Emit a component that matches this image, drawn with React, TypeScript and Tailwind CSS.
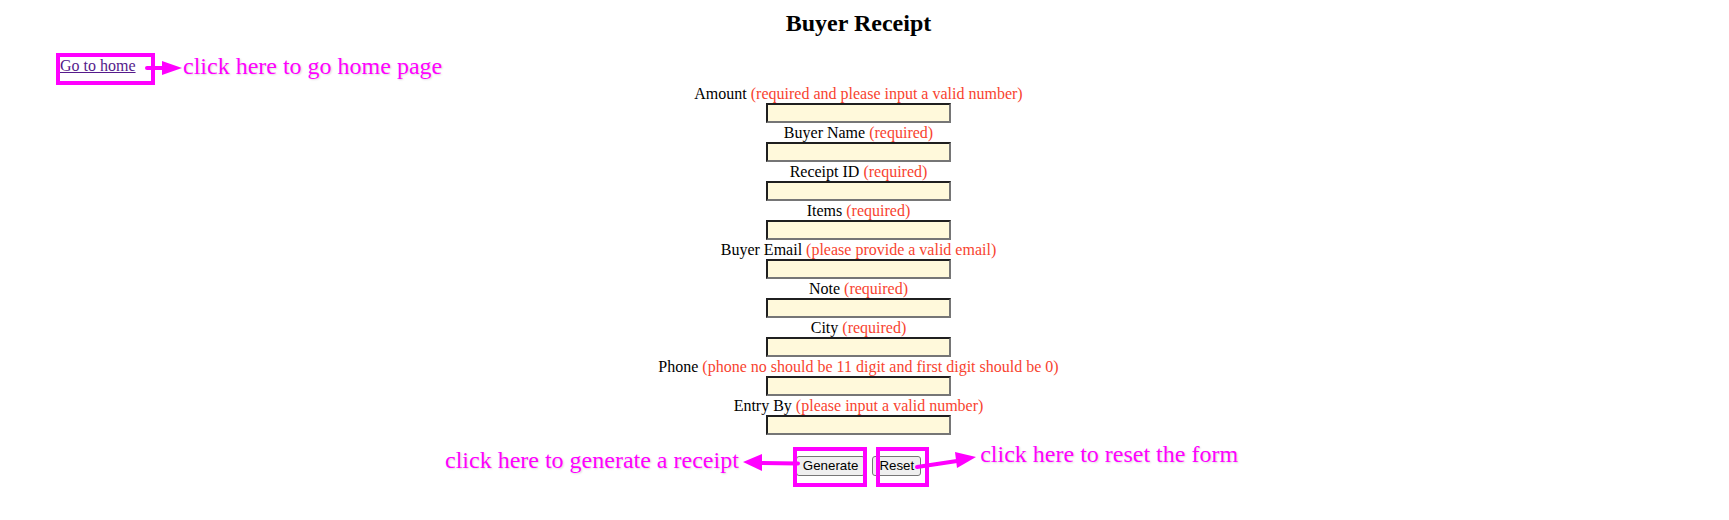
import React from "react";

const fields: [string, string][] = [
  ["Amount", "(required and please input a valid number)"],
  ["Buyer Name", "(required)"],
  ["Receipt ID", "(required)"],
  ["Items", "(required)"],
  ["Buyer Email", "(please provide a valid email)"],
  ["Note", "(required)"],
  ["City", "(required)"],
  ["Phone", "(phone no should be 11 digit and first digit should be 0)"],
  ["Entry By", "(please input a valid number)"],
];

const btn =
  "h-[20px] px-[6px] bg-[#efefef] border border-[#767676] rounded-[3px] font-['Liberation_Sans',Arial,sans-serif] text-[13.33px] leading-[16px] text-black whitespace-nowrap";

const note =
  "text-[24px] leading-[26px] text-[#ff00ff] whitespace-nowrap [text-shadow:1px_1px_2px_rgba(0,0,0,0.15)]";

export default function App() {
  return (
    <div className="w-[1717px] min-h-[520px] bg-white font-['Liberation_Serif',serif] text-black">
      <h2 className="text-center text-[24px] font-bold leading-[27px] pt-[10px]">Buyer Receipt</h2>

      <div className="mt-[16px] h-[31px] flex items-start pl-[56px]">
        <div className="w-[99px] h-[32px] border-4 border-[#ff00ff] shrink-0">
          <a href="#" className="block text-[16px] leading-[18px] text-[#551a8b] underline whitespace-nowrap">
            Go to home
          </a>
        </div>
        <svg className="-ml-[11px] mt-[7px] shrink-0 relative" width="39" height="16" viewBox="0 0 39 16">
          <line x1="3" y1="8" x2="20" y2="8" stroke="#ff00ff" strokeWidth="4" strokeLinecap="round" />
          <polygon points="18,1 38,8 18,15" fill="#ff00ff" />
        </svg>
        <span className={note}>click here to go home page</span>
      </div>

      <div className="flex flex-col items-center">
        {fields.map(([l, h]) => (
          <div key={l} className="flex flex-col items-center">
            <div className="h-[19px] leading-[19px] text-[16px] whitespace-nowrap">
              {l} <span className="text-[#f8432f]">{h}</span>
            </div>
            <input
              type="text"
              className="w-[185px] h-[20px] bg-[#fff9db] border-2 border-t-[#1f1f1f] border-l-[#1f1f1f] border-r-[#767676] border-b-[#767676] outline-none"
            />
          </div>
        ))}
      </div>

      <div className="mt-[18px] grid grid-cols-[1fr_auto_1fr] items-start">
        <div className="flex justify-end items-start">
          <span className={`${note} -mt-[6px]`}>click here to generate a receipt</span>
          <svg className="relative z-10 -mt-[1px] -mr-[5px] shrink-0" width="62" height="20" viewBox="0 0 62 20">
            <polygon points="4,10 23,2 23,19" fill="#ff00ff" />
            <line x1="22" y1="11" x2="59" y2="11.5" stroke="#ff00ff" strokeWidth="4" strokeLinecap="round" />
          </svg>
        </div>

        <div className="flex items-start gap-[7px]">
          <div className="relative">
            <button className={btn}>Generate</button>
            <div className="absolute -left-[3px] -right-[2px] -top-[6px] -bottom-[10px] border-4 border-[#ff00ff] pointer-events-none" />
          </div>
          <div className="relative">
            <button className={btn}>Reset</button>
            <div className="absolute left-[4px] -right-[8px] -top-[6px] -bottom-[10px] border-4 border-[#ff00ff] pointer-events-none" />
          </div>
        </div>

        <div className="flex justify-start items-start">
          <svg className="relative z-10 -mt-[4px] -ml-[7px] shrink-0" width="66" height="22" viewBox="0 0 66 22">
            <line x1="3" y1="18" x2="43" y2="12" stroke="#ff00ff" strokeWidth="4" strokeLinecap="round" />
            <polygon points="41,3 62,8 43,19" fill="#ff00ff" />
          </svg>
          <span className={`${note} -mt-[12px]`}>click here to reset the form</span>
        </div>
      </div>
    </div>
  );
}
